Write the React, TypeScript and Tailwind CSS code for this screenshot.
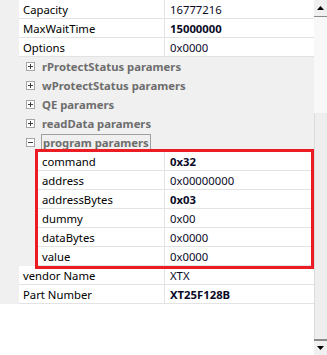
import { ReactNode } from "react";

type Prop = { label: string; value: string; bold?: boolean };

const rootTop: Prop[] = [
  { label: "Capacity", value: "16777216" },
  { label: "MaxWaitTime", value: "15000000", bold: true },
  { label: "Options", value: "0x0000" },
];

const categories = [
  "rProtectStatus paramers",
  "wProtectStatus paramers",
  "QE paramers",
  "readData paramers",
];

const programProps: Prop[] = [
  { label: "command", value: "0x32", bold: true },
  { label: "address", value: "0x00000000" },
  { label: "addressBytes", value: "0x03", bold: true },
  { label: "dummy", value: "0x00" },
  { label: "dataBytes", value: "0x0000" },
  { label: "value", value: "0x0000" },
];

const rootBottom: Prop[] = [
  { label: "vendor Name", value: "XTX" },
  { label: "Part Number", value: "XT25F128B", bold: true },
];

const ExpandBox = ({ open }: { open?: boolean }) => (
  <svg width="9" height="9" viewBox="0 0 9 9" className="block">
    <rect x="0.5" y="0.5" width="8" height="8" fill="#fff" stroke="#a5a5a5" />
    <line x1="2" y1="4.5" x2="7" y2="4.5" stroke="#404040" />
    {!open && <line x1="4.5" y1="2" x2="4.5" y2="7" stroke="#404040" />}
  </svg>
);

const PropRow = ({ p, indent }: { p: Prop; indent: number }) => (
  <div className="flex h-[19px]">
    <div className="shrink-0 bg-[#f0f0f0]" style={{ width: indent }} />
    <div className="flex flex-1 border-b border-[#e3e3e3] bg-white">
      <div
        className="shrink-0 pl-[4px] pt-[1px] leading-[17px] text-black"
        style={{ width: 145 - (indent - 19) }}
      >
        {p.label}
      </div>
      <div
        className={
          "flex-1 border-l border-[#e3e3e3] pl-[5px] pt-[1px] leading-[17px] text-[#0a0a28] " +
          (p.bold ? "font-bold" : "")
        }
      >
        {p.value}
      </div>
    </div>
  </div>
);

const CategoryRow = ({ title, open, children }: { title: string; open?: boolean; children?: ReactNode }) => (
  <div className="flex h-[19px] items-center bg-[#f0f0f0]">
    <div className="w-[26px] shrink-0" />
    <ExpandBox open={open} />
    <div className="w-[6px] shrink-0" />
    {children ?? (
      <span className="pl-[1px] font-bold leading-[18px] text-[#6d6d6d]">{title}</span>
    )}
  </div>
);

const ScrollBar = () => (
  <div className="flex h-[355px] w-[13px] shrink-0 flex-col bg-[#f0f0f0]">
    <div className="flex h-[16px] items-center justify-center">
      <svg width="7" height="4" viewBox="0 0 7 4">
        <polygon points="0,4 7,4 3.5,0" fill="#000" />
      </svg>
    </div>
    <div className="h-[1px] bg-[#8a8a8a]" />
    <div className="h-[96px] bg-[#f8f8f8]" />
    <div className="flex-1 border-l border-[#dcdcdc] bg-[#eeeeee]" />
    <div className="h-[2px] bg-[#8a8a8a]" />
    <div className="flex h-[14px] items-center justify-center">
      <svg width="7" height="4" viewBox="0 0 7 4">
        <polygon points="0,0 7,0 3.5,4" fill="#000" />
      </svg>
    </div>
  </div>
);

export default function App() {
  return (
    <div
      className="flex h-[355px] w-[327px] overflow-hidden bg-white text-[11.3px]"
      style={{ fontFamily: '"Noto Sans", "Open Sans", sans-serif' }}
    >
      <div className="relative flex w-[314px] shrink-0 flex-col">
        {rootTop.map((p) => (
          <PropRow key={p.label} p={p} indent={19} />
        ))}
        {categories.map((c) => (
          <CategoryRow key={c} title={c} />
        ))}
        <CategoryRow title="program paramers" open>
          <span className="border border-[#a0a0a0] px-[1px] font-bold leading-[16px] text-[#6d6d6d]">
            program paramers
          </span>
        </CategoryRow>
        {programProps.map((p) => (
          <PropRow key={p.label} p={p} indent={38} />
        ))}
        {rootBottom.map((p) => (
          <PropRow key={p.label} p={p} indent={19} />
        ))}
        <div className="flex-1 bg-white" />

        {/* red highlight around program params */}
        <div className="pointer-events-none absolute left-[35px] top-[149px] h-[120px] w-[279px] border-[3px] border-[#ec1c24]" />
      </div>
      <ScrollBar />
    </div>
  );
}
